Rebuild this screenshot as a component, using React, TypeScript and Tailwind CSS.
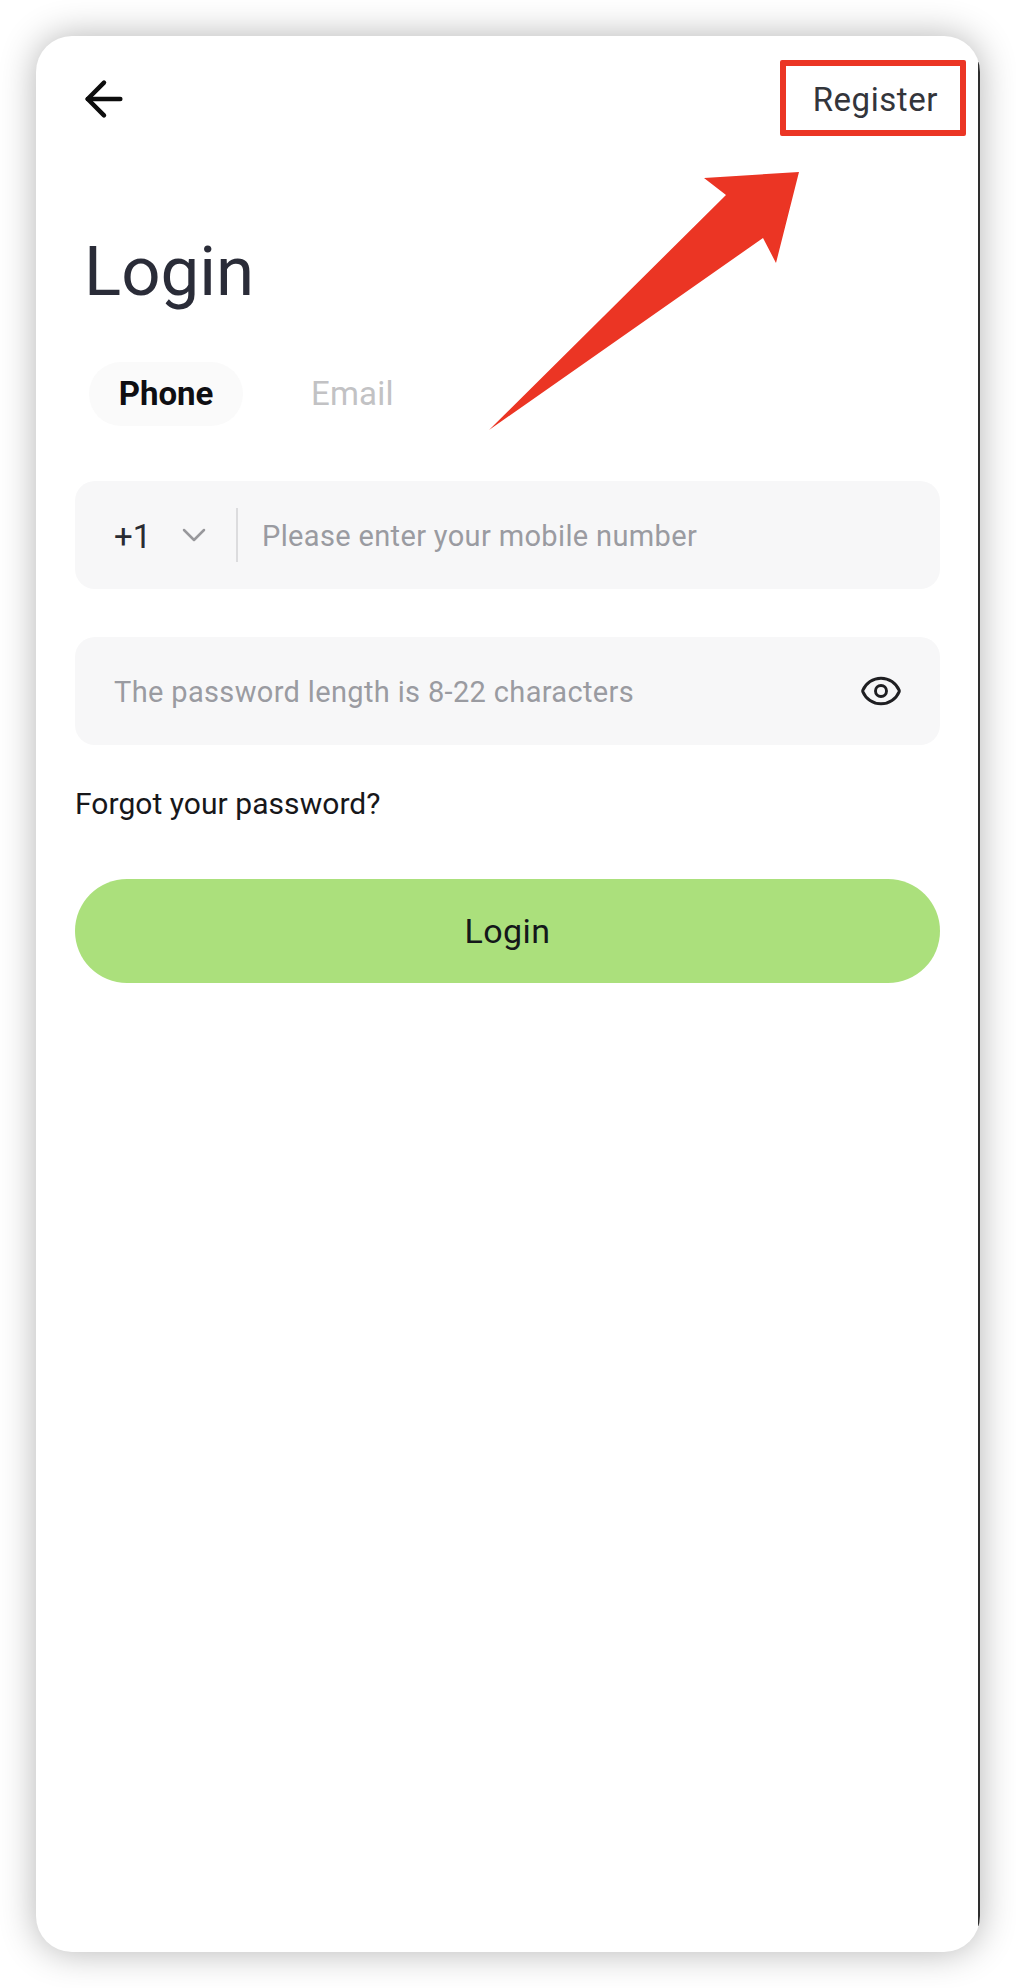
import { ArrowLeft, ChevronDown, Eye } from 'lucide-react';

export default function App() {
  return (
    <div className="w-[1016px] h-[1988px] bg-white pt-9 pl-9 font-['Roboto',sans-serif]">
      <div className="relative w-[944px] h-[1916px] bg-white rounded-[36px] shadow-[0_0_36px_rgba(0,0,0,0.3)] overflow-hidden">
        {/* dark edge on the right of the phone capture */}
        <div className="absolute right-0 top-[26px] bottom-[26px] w-[2px] bg-[#2e2e2e]"></div>

        <div className="pl-[39px] pr-[40px]">
          <div className="flex items-center justify-between h-[120px] pt-[6px]">
            <ArrowLeft className="w-[56px] h-[56px] ml-[1px] text-[#0d0d0d]" strokeWidth={1.9} />
            <span className="mr-[2px] pt-[2px] text-[33px] leading-[40px] tracking-[0.55px] text-[#33353b]">Register</span>
          </div>

          <h1 className="mt-[77px] ml-[9px] text-[69px] leading-[78px] text-[#2a2c38]">Login</h1>

          <div className="flex items-center mt-[51px] ml-[14px]">
            <div className="flex items-center justify-center w-[154px] h-[64px] rounded-full bg-[#fafafa] text-[33px] font-bold text-[#0e0e12]">Phone</div>
            <div className="ml-[68px] text-[33px] tracking-[0.2px] text-[#c2c2c4]">Email</div>
          </div>

          <div className="flex items-center h-[108px] mt-[55px] rounded-[20px] bg-[#f7f7f8] pl-[39px]">
            <span className="w-[60px] pt-[3px] text-[33px] text-[#2a2c33]">+1</span>
            <ChevronDown className="w-[40px] h-[40px] text-[#98989c]" strokeWidth={1.5} />
            <div className="w-[2px] h-[54px] ml-[22px] bg-[#dcdcde]"></div>
            <span className="ml-[24px] pt-[3px] text-[29px] tracking-[0.35px] text-[#9a9ba1]">Please enter your mobile number</span>
          </div>

          <div className="flex items-center justify-between h-[108px] mt-[48px] rounded-[20px] bg-[#f7f7f8] pl-[39px] pr-[37px]">
            <span className="pt-[3px] text-[29px] tracking-[0.35px] text-[#9a9ba1]">The password length is 8-22 characters</span>
            <Eye className="w-[44px] h-[44px] text-[#1f1f22]" strokeWidth={1.6} />
          </div>

          <div className="mt-[41px] text-[30px] leading-[36px] tracking-[0.05px] text-[#17171a]">Forgot your password?</div>

          <button className="flex items-center justify-center w-[865px] h-[104px] mt-[57px] rounded-full bg-[#abe07c] text-[34px] tracking-[0.4px] text-[#14181a]">Login</button>
        </div>

        {/* annotation drawn over the capture */}
        <div className="absolute left-[744px] top-[24px] w-[186px] h-[76px] rounded-[2px] border-[6px] border-[#eb3524]"></div>
        <svg className="absolute left-0 top-0" width="944" height="500" viewBox="0 0 944 500">
          <polygon points="763,136 668,142 690,159 453,394 727,202 740,227" fill="#eb3524" />
        </svg>
      </div>
    </div>
  );
}
